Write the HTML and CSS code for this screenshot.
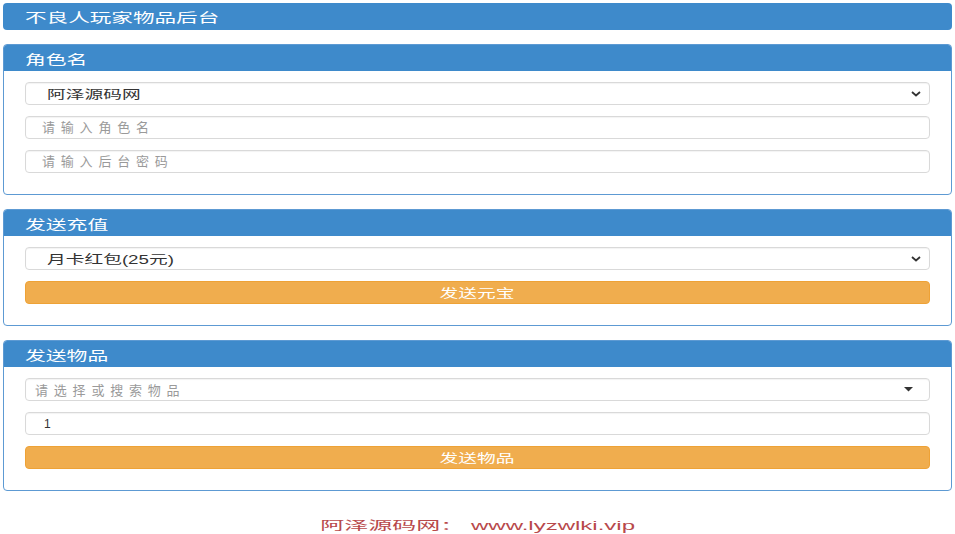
FILE: index.html
```html
<!DOCTYPE html>
<html lang="zh-CN">
<head>
<meta charset="utf-8">
<title>不良人玩家物品后台</title>
<link rel="stylesheet" href="styles.css">
</head>
<body>
<div class="page">
  <header class="topbar"><span class="sx title">不良人玩家物品后台</span></header>

  <section class="panel">
    <div class="panel-heading"><span class="sx">角色名</span></div>
    <div class="panel-body">
      <div class="field select">
        <span class="sx">阿泽源码网</span>
        <svg class="chev" width="10" height="6" viewBox="0 0 10 6"><path d="M1 1 L5 4.5 L9 1" fill="none" stroke="#333" stroke-width="1.8"/></svg>
      </div>
      <input class="field input" type="text" placeholder="请输入角色名">
      <input class="field input" type="password" placeholder="请输入后台密码">
    </div>
  </section>

  <section class="panel">
    <div class="panel-heading"><span class="sx">发送充值</span></div>
    <div class="panel-body">
      <div class="field select">
        <span class="sx">月卡红包(25元)</span>
        <svg class="chev" width="10" height="6" viewBox="0 0 10 6"><path d="M1 1 L5 4.5 L9 1" fill="none" stroke="#333" stroke-width="1.8"/></svg>
      </div>
      <button class="btn" type="button"><span class="sx c">发送元宝</span></button>
    </div>
  </section>

  <section class="panel">
    <div class="panel-heading"><span class="sx">发送物品</span></div>
    <div class="panel-body">
      <div class="field select2">
        <span class="ph">请选择或搜索物品</span>
        <svg class="caret" width="9" height="5" viewBox="0 0 9 5"><path d="M0 0 H9 L4.5 4.5 Z" fill="#333"/></svg>
      </div>
      <input class="field input num" type="text" value="1">
      <button class="btn" type="button"><span class="sx c">发送物品</span></button>
    </div>
  </section>

  <footer class="footer"><span class="sx c">阿泽源码网： www.lyzwlki.vip</span></footer>
</div>
</body>
</html>
```

FILE: styles.css
```css
html, body {
  margin: 0;
  padding: 0;
  background: #fff;
}
body {
  font-family: "Liberation Sans", "Noto Sans CJK SC", sans-serif;
  font-size: 12px;
  color: #333;
}
.page {
  padding: 3px 3px 0 3px;
}
.sx {
  display: inline-block;
  transform: scaleX(1.56);
  transform-origin: left center;
  white-space: nowrap;
}
.sx.c {
  transform-origin: center center;
}
.topbar {
  height: 27px;
  background: #3e8acb;
  border-radius: 4px;
  display: flex;
  align-items: center;
  padding-left: 22px;
  color: #fff;
  font-size: 13px;
}
.topbar .sx {
  transform: scaleX(1.66);
}
.panel {
  margin-top: 14px;
  border: 1px solid #5d9ad3;
  border-radius: 4px;
  overflow: hidden;
  background: #fff;
}
.panel-heading {
  height: 26px;
  background: #3e8acb;
  color: #fff;
  font-size: 13px;
  display: flex;
  align-items: center;
  padding-left: 21px;
}
.panel-heading .sx {
  transform: scaleX(1.6);
}
.panel-body {
  padding: 11px 21px 21px 21px;
  display: flex;
  flex-direction: column;
  gap: 11px;
}
.field {
  box-sizing: border-box;
  height: 23px;
  width: 100%;
  border: 1px solid #d9d9d9;
  border-radius: 4px;
  background: #fff;
  box-shadow: inset 0 1px 1px rgba(0,0,0,0.05);
  font-family: "Liberation Sans", "Noto Sans CJK SC", sans-serif;
  font-size: 12px;
  color: #333;
  margin: 0;
}
.select {
  display: flex;
  align-items: center;
  justify-content: space-between;
  padding: 0 8px 0 21px;
}
.select2 {
  display: flex;
  align-items: center;
  justify-content: space-between;
  padding: 0 16px 0 9px;
}
.input {
  padding: 0 0 0 16px;
  outline: none;
}
.input::placeholder,
.ph {
  color: #9a9a9a;
  font-size: 13px;
  letter-spacing: 5.8px;
}
.input.num {
  padding-left: 18px;
}
.btn {
  box-sizing: border-box;
  height: 23px;
  width: 100%;
  border: 1px solid #eea236;
  border-radius: 4px;
  background: #f0ad4e;
  color: #fff;
  font-family: "Liberation Sans", "Noto Sans CJK SC", sans-serif;
  font-size: 12px;
  padding: 0;
  display: flex;
  align-items: center;
  justify-content: center;
}
.footer {
  margin-top: 27px;
  line-height: 16px;
  text-align: center;
  color: #b8494b;
  font-size: 12px;
}
.footer .sx {
  transform: scaleX(2);
}
```
